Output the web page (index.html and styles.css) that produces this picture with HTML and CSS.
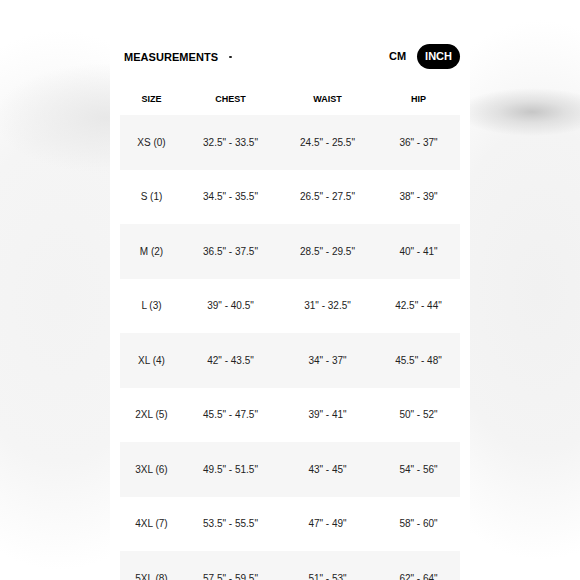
FILE: index.html
```html
<!DOCTYPE html>
<html>
<head>
<meta charset="utf-8">
<link rel="stylesheet" href="styles.css">
</head>
<body>
<div class="card">
  <div class="topbar">
    <span class="title">MEASUREMENTS</span>
    <span class="dot"></span>
    <div class="units">
      <span class="unit">CM</span>
      <span class="unit active">INCH</span>
    </div>
  </div>
  <div class="table">
    <div class="row head"><span>SIZE</span><span>CHEST</span><span>WAIST</span><span>HIP</span></div>
    <div class="row shade"><span>XS (0)</span><span>32.5" - 33.5"</span><span>24.5" - 25.5"</span><span>36" - 37"</span></div>
    <div class="row"><span>S (1)</span><span>34.5" - 35.5"</span><span>26.5" - 27.5"</span><span>38" - 39"</span></div>
    <div class="row shade"><span>M (2)</span><span>36.5" - 37.5"</span><span>28.5" - 29.5"</span><span>40" - 41"</span></div>
    <div class="row"><span>L (3)</span><span>39" - 40.5"</span><span>31" - 32.5"</span><span>42.5" - 44"</span></div>
    <div class="row shade"><span>XL (4)</span><span>42" - 43.5"</span><span>34" - 37"</span><span>45.5" - 48"</span></div>
    <div class="row"><span>2XL (5)</span><span>45.5" - 47.5"</span><span>39" - 41"</span><span>50" - 52"</span></div>
    <div class="row shade"><span>3XL (6)</span><span>49.5" - 51.5"</span><span>43" - 45"</span><span>54" - 56"</span></div>
    <div class="row"><span>4XL (7)</span><span>53.5" - 55.5"</span><span>47" - 49"</span><span>58" - 60"</span></div>
    <div class="row shade"><span>5XL (8)</span><span>57.5" - 59.5"</span><span>51" - 53"</span><span>62" - 64"</span></div>
  </div>
</div>
</body>
</html>
```
FILE: styles.css
```css
html, body {
  margin: 0;
  padding: 0;
  height: 580px;
  overflow: hidden;
}
body {
  font-family: "Liberation Sans", Arial, sans-serif;
  background:
    radial-gradient(ellipse 75px 24px at 532px 112px, #c6c6c6 0%, rgba(210,210,210,0.6) 45%, rgba(255,255,255,0) 100%),
    radial-gradient(ellipse 110px 55px at 105px 118px, #e8e8e8 0%, rgba(236,236,236,0) 100%),
    radial-gradient(ellipse 170px 270px at 60px 300px, #f3f3f3 0%, #f5f5f5 60%, rgba(255,255,255,0) 100%),
    radial-gradient(ellipse 160px 270px at 540px 290px, #f1f1f1 0%, #f4f4f4 60%, rgba(255,255,255,0) 100%),
    #ffffff;
  display: flex;
  justify-content: center;
}
.card {
  width: 340px;
  background: #fff;
  padding: 44px 10px 0;
  min-height: 580px;
  box-sizing: content-box;
}
.topbar {
  display: flex;
  align-items: center;
  height: 25px;
  padding-left: 4px;
}
.title {
  font-size: 11px;
  font-weight: bold;
  color: #000;
  letter-spacing: 0.05px;
}
.dot {
  width: 2.5px;
  height: 2.5px;
  border-radius: 50%;
  background: #222;
  margin-left: 11px;
  margin-top: 1px;
}
.units {
  margin-left: auto;
  display: flex;
  align-items: center;
  gap: 3px;
}
.unit {
  font-size: 11px;
  font-weight: bold;
  color: #000;
  height: 25px;
  line-height: 25px;
  padding: 0 8px;
  border-radius: 13px;
}
.unit.active {
  background: #000;
  color: #fff;
}
.table {
  margin-top: 13px;
}
.row {
  display: grid;
  grid-template-columns: 63px 95px 99px 83px;
  height: 54.5px;
  align-items: center;
  text-align: center;
  font-size: 10px;
  color: #222;
}
.row.head {
  height: 33px;
  font-size: 9px;
  font-weight: bold;
  color: #000;
}
.row.shade {
  background: #f6f6f6;
}
```
